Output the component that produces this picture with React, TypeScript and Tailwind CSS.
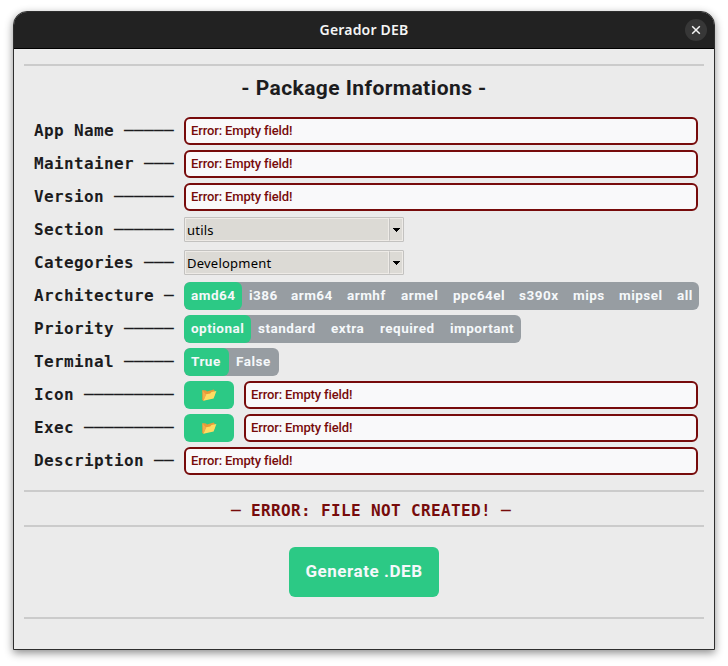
import type { ReactNode } from "react";

const EMPTY = "Error: Empty field!";

function Divider() {
  return <div className="mx-[10px] h-[2px] shrink-0 bg-[#cbcbcb]" />;
}

function Row({ label, children }: { label: string; children: ReactNode }) {
  const count = 14 - label.length - 1;
  return (
    <div className="flex h-[28px]">
      <div className="flex w-[150px] shrink-0 whitespace-pre font-['DejaVu_Sans_Mono',monospace] text-[16px] leading-[27px] font-bold tracking-[0.37px] text-[#1c1c1e]">
        <span>{label} </span>
        <span className="font-normal">{"─".repeat(count)}</span>
      </div>
      {children}
    </div>
  );
}

function ErrorField() {
  return (
    <div className="mr-px h-[28px] flex-1 rounded-[6px] border-2 border-[#770b0b] bg-[#f9f9fa] pl-[5px] font-[Roboto,sans-serif] text-[13px] leading-[23px] font-medium tracking-[-0.14px] text-[#770b0b]">
      {EMPTY}
    </div>
  );
}

function Combo({ value }: { value: string }) {
  return (
    <div className="mt-[1px] flex h-[25px] w-[220px] rounded-[1px] border border-[#c3c2c0] bg-[#dcdad5]">
      <div className="flex-1 border border-[#eeebe7] pl-[1px] font-['Noto_Sans','Open_Sans',sans-serif] text-[13px] leading-[23px] tracking-[0.22px] text-black">
        {value}
      </div>
      <div className="flex w-[14px] items-center justify-center border border-[#eeebe7] border-l-[#c3c2c0] pt-px">
        <svg width="7" height="4" viewBox="0 0 7 4" shapeRendering="crispEdges">
          <path d="M0 0H7V1H6V2H5V3H4V4H3V3H2V2H1V1H0Z" fill="#000" />
        </svg>
      </div>
    </div>
  );
}

function Segments({ items }: { items: [string, string][] }) {
  return (
    <div className="flex h-[28px] overflow-hidden rounded-[6px] bg-[#979da2] font-[Roboto,sans-serif] text-[13.5px] leading-[27px] font-bold tracking-[0.5px] text-[#f5f8fa]">
      {items.map(([name, width], i) => (
        <div key={name} className={`${width} shrink-0 pl-[7px] whitespace-nowrap ${i === 0 ? "rounded-[6px] bg-[#2cc985]" : ""}`}>
          {name}
        </div>
      ))}
    </div>
  );
}

function FolderButton() {
  return (
    <button className="mr-[10px] flex h-[28px] w-[50px] items-center justify-center rounded-[6px] bg-[#2cc985]">
      <svg width="16" height="14" viewBox="0 0 16 14">
        <path d="M1.3 2.1 5 2.4 6 3.5 12.7 1.6 13.5 2.2V8L2.5 12.8 1.2 12Z" fill="#e99b38" />
        <path d="M5.2 6.3 9.2 5.6 10.5 4.1 15.4 3.1 12.6 10.6 2.4 12.8Z" fill="#ffdc62" />
        <path d="M1.5 2.5 2.4 12.6 5 6.4" fill="#f4ad4c" />
      </svg>
    </button>
  );
}

export default function App() {
  return (
    <div className="h-[666px] w-[728px] overflow-hidden bg-white pt-[11px] pl-[13px]">
      <div className="flex h-[639px] w-[702px] flex-col overflow-hidden rounded-t-[14px] border border-[#2e2e2e] bg-[#ebebeb] shadow-[0_3px_9px_0px_rgba(0,0,0,0.45)]">
        <header className="flex h-[37px] shrink-0 items-center border-b border-black bg-[#222222] pr-[7px] pl-[29px]">
          <div className="flex-1 text-center font-['Noto_Sans','Open_Sans',sans-serif] text-[14px] leading-[36px] font-semibold tracking-[0.2px] text-[#f5f5f5]">
            Gerador DEB
          </div>
          <div className="flex size-[22px] items-center justify-center rounded-full bg-[#373737]">
            <svg width="10" height="10" viewBox="0 0 10 10">
              <path d="M1.2 1.2 8.8 8.8M8.8 1.2 1.2 8.8" stroke="#f5f5f5" strokeWidth="1.5" />
            </svg>
          </div>
        </header>
        <div className="h-[15px] shrink-0" />
        <Divider />
        <h1 className="h-[51px] shrink-0 text-center font-[Roboto,sans-serif] text-[21px] leading-[44px] font-bold tracking-[0.43px] text-[#1c1c1e]">
          - Package Informations -
        </h1>
        <div className="flex flex-col gap-[5px] pr-[15px] pl-[20px]">
          <Row label="App Name"><ErrorField /></Row>
          <Row label="Maintainer"><ErrorField /></Row>
          <Row label="Version"><ErrorField /></Row>
          <Row label="Section"><Combo value="utils" /></Row>
          <Row label="Categories"><Combo value="Development" /></Row>
          <Row label="Architecture">
            <Segments items={[["amd64", "w-[58px]"], ["i386", "w-[42px]"], ["arm64", "w-[56px]"], ["armhf", "w-[54px]"], ["armel", "w-[52px]"], ["ppc64el", "w-[66px]"], ["s390x", "w-[54px]"], ["mips", "w-[46px]"], ["mipsel", "w-[58px]"], ["all", "w-[29px]"]]} />
          </Row>
          <Row label="Priority">
            <Segments items={[["optional", "w-[67px]"], ["standard", "w-[73px]"], ["extra", "w-[49px]"], ["required", "w-[70px]"], ["important", "w-[78px]"]]} />
          </Row>
          <Row label="Terminal">
            <Segments items={[["True", "w-[45px]"], ["False", "w-[50px]"]]} />
          </Row>
          <Row label="Icon"><FolderButton /><ErrorField /></Row>
          <Row label="Exec"><FolderButton /><ErrorField /></Row>
          <Row label="Description"><ErrorField /></Row>
        </div>
        <div className="h-[15px] shrink-0" />
        <Divider />
        <p className="h-[33px] shrink-0 pl-[14px] text-center font-['DejaVu_Sans_Mono',monospace] text-[16px] leading-[38px] font-bold tracking-[0.37px] text-[#770b0b]">
          <span className="font-normal">─</span> ERROR: FILE NOT CREATED! <span className="font-normal">─</span>
        </p>
        <Divider />
        <div className="flex h-[90px] shrink-0 justify-center pt-[20px]">
          <button className="h-[50px] w-[150px] rounded-[6px] bg-[#2cc985] pb-[2px] font-[Roboto,sans-serif] text-[17px] leading-[48px] font-bold tracking-[0.55px] text-[#f5f8fa]">
            Generate .DEB
          </button>
        </div>
        <Divider />
      </div>
    </div>
  );
}
